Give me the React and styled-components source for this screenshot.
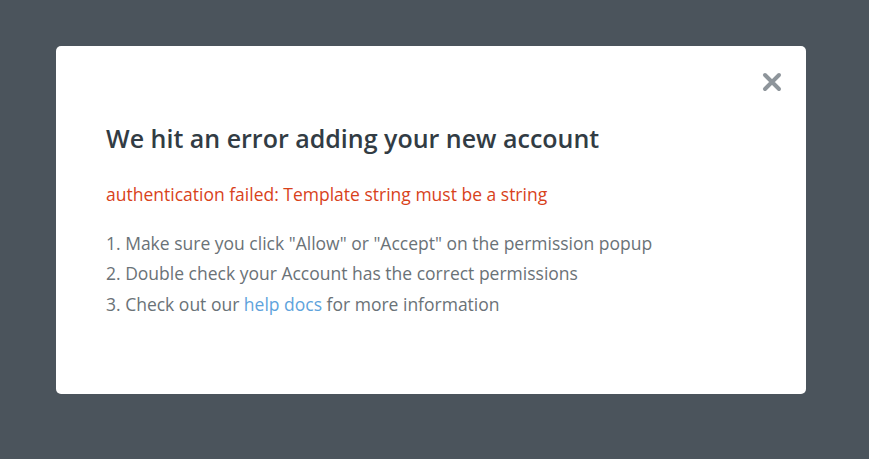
import styled, { createGlobalStyle } from "styled-components";

const GlobalStyle = createGlobalStyle`
  html, body {
    margin: 0;
    padding: 0;
    background: #4b545c;
    font-family: "Open Sans", "Liberation Sans", sans-serif;
  }
`;

const Overlay = styled.div`
  width: 869px;
  height: 459px;
  box-sizing: border-box;
  padding: 46px 63px 0 56px;
`;

const Modal = styled.div`
  position: relative;
  width: 750px;
  height: 348px;
  box-sizing: border-box;
  background: #fff;
  border-radius: 5px;
  padding: 80px 50px 0 50px;
  display: flex;
  flex-direction: column;
`;

const Close = styled.button`
  position: absolute;
  top: 24px;
  right: 22px;
  width: 24px;
  height: 24px;
  padding: 0;
  border: none;
  background: none;
  cursor: pointer;
  display: flex;
  align-items: center;
  justify-content: center;
`;

const Title = styled.h2`
  margin: 0;
  font-size: 25px;
  font-weight: 600;
  line-height: 1;
  color: #323c44;
`;

const ErrorText = styled.p`
  margin: 35px 0 0;
  font-size: 17.5px;
  line-height: 1;
  color: #d8421b;
`;

const Steps = styled.ol`
  margin: 24px 0 0;
  padding: 0;
  list-style: none;
  font-size: 17.5px;
  line-height: 30.5px;
  color: #6a7277;
`;

const Link = styled.a`
  color: #5ea3dc;
  text-decoration: none;
`;

export default function App() {
  return (
    <>
      <GlobalStyle />
      <Overlay>
        <Modal>
          <Close aria-label="Close">
            <svg width="20" height="20" viewBox="0 0 20 20">
              <path
                d="M3 3 L17 17 M17 3 L3 17"
                stroke="#8e959b"
                strokeWidth="4"
                strokeLinecap="round"
              />
            </svg>
          </Close>
          <Title>We hit an error adding your new account</Title>
          <ErrorText>authentication failed: Template string must be a string</ErrorText>
          <Steps>
            <li>1. Make sure you click "Allow" or "Accept" on the permission popup</li>
            <li>2. Double check your Account has the correct permissions</li>
            <li>
              3. Check out our <Link href="#">help docs</Link> for more information
            </li>
          </Steps>
        </Modal>
      </Overlay>
    </>
  );
}
